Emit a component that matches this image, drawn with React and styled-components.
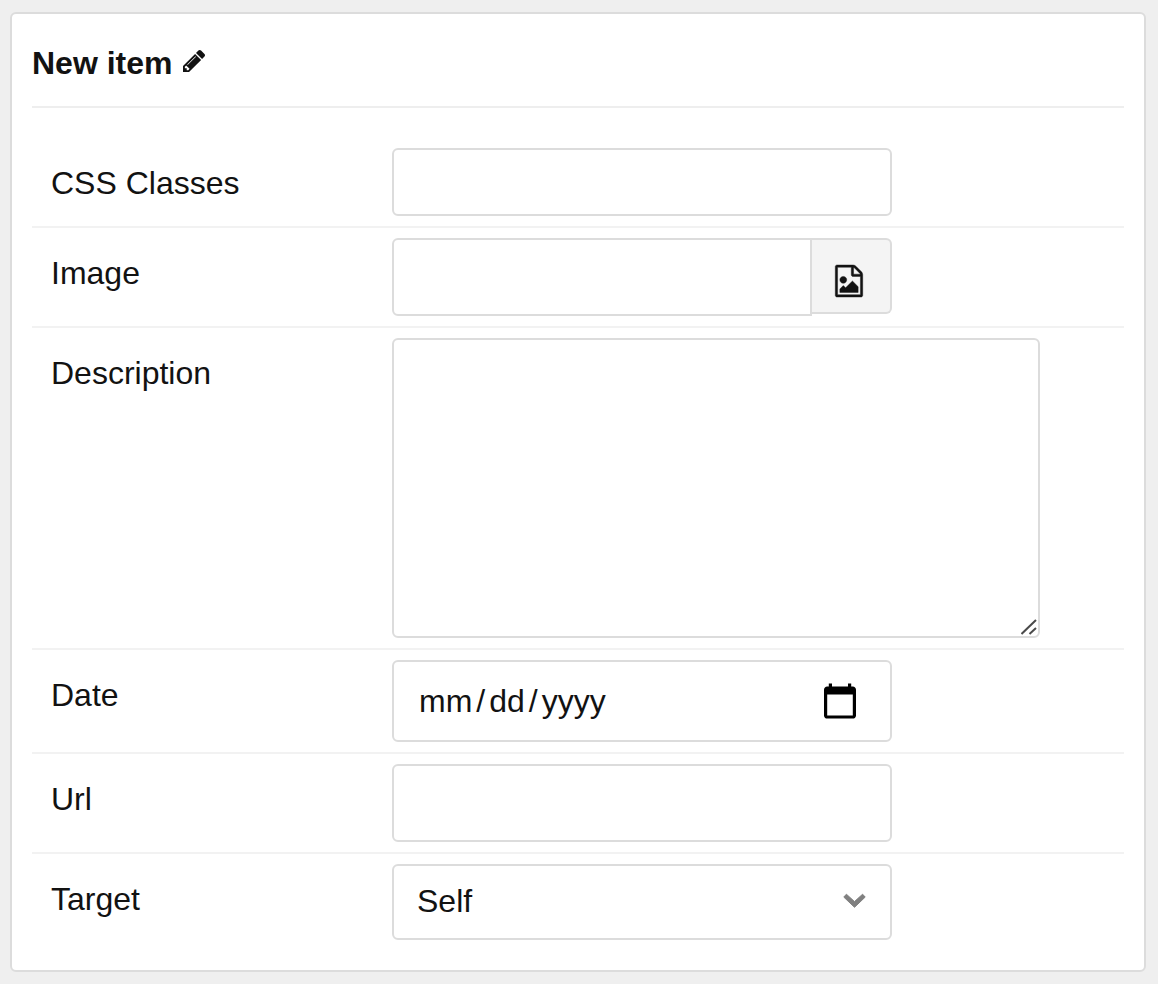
import React from "react";
import styled, { createGlobalStyle, css } from "styled-components";

const GlobalStyle = createGlobalStyle`
  *, *::before, *::after { box-sizing: border-box; }
  body {
    margin: 0;
    background: #efefef;
    color: #121212;
    font-family: "Helvetica Neue", "Liberation Sans", Arial, sans-serif;
    font-size: 32px;
    line-height: 40px;
  }
`;

const Page = styled.main`
  padding: 12px 12px 12px 10px;
`;

const Card = styled.section`
  padding: 20px;
  background: #fff;
  border: 2px solid #dcdcdc;
  border-radius: 6px;
`;

const Header = styled.header`
  display: flex;
  align-items: center;
  gap: 11px;
  padding-bottom: 14px;
  border-bottom: 2px solid #eee;
`;

const Title = styled.h1`
  margin: 0;
  font-size: 32px;
  font-weight: 600;
  line-height: 58px;
`;

const IconButton = styled.button`
  display: flex;
  padding: 0 0 4px;
  border: 0;
  background: none;
  color: inherit;
  cursor: pointer;
`;

const Form = styled.form`
  padding-top: 30px;
`;

const Row = styled.div`
  display: grid;
  grid-template-columns: 341px minmax(0, 1fr);
  align-items: start;
  padding: 10px 0 10px 19px;
  border-bottom: 2px solid #f2f2f2;

  &:last-child { border-bottom: 0; }
`;

const Label = styled.label`
  padding-top: 15px;
`;

const Field = styled.div`
  position: relative;
  display: flex;
  align-items: flex-start;
  width: 100%;
  max-width: ${(p) => (p.$wide ? 648 : 500)}px;
`;

const control = css`
  display: block;
  flex: 1;
  min-width: 0;
  margin: 0;
  border: 2px solid #dcdcdc;
  border-radius: 6px;
  background: #fff;
  color: inherit;
  font: inherit;
`;

const TextInput = styled.input`
  ${control}
  height: ${(p) => p.$height}px;
  padding: 0 24px;
  ${(p) => p.$joined && css`border-radius: 6px 0 0 6px;`}
`;

const DateInput = styled(TextInput)`
  &::-webkit-datetime-edit-text {
    padding: 0 3px;
  }

  &::-webkit-calendar-picker-indicator {
    width: 36px;
    height: 36px;
    opacity: 0;
  }
`;

const TextArea = styled.textarea`
  ${control}
  height: 300px;
  padding: 12px 24px;
  resize: vertical;

  &::-webkit-resizer { display: none; }
`;

const Select = styled.select`
  ${control}
  height: 76px;
  padding: 0 60px 2px 23px;
  appearance: none;
`;

const PickButton = styled.button`
  display: flex;
  align-items: center;
  justify-content: center;
  width: 80px;
  height: 76px;
  padding: 10px 4px 0 0;
  border: 2px solid #dcdcdc;
  border-left: 0;
  border-radius: 0 6px 6px 0;
  background: #f4f4f4;
  color: inherit;
  cursor: pointer;
`;

const Overlay = styled.svg`
  position: absolute;
  right: ${(p) => p.$right}px;
  bottom: ${(p) => p.$bottom}px;
  pointer-events: none;
`;

const PencilIcon = () => (
  <svg width="22" height="22" viewBox="0 149 1515 1515" fill="currentColor" aria-hidden="true">
    <path d="M363 1536l91-91-235-235-91 91v107h128v128h107zm523-928q0-22-22-22-10 0-17 7l-542 542q-7 7-7 17 0 22 22 22 10 0 17-7l542-542q7-7 7-17zm-54-192l416 416-832 832h-416v-416zm683 96q0 53-37 90l-166 166-416-416 166-165q36-38 90-38 53 0 91 38l235 234q37 39 37 91z" />
  </svg>
);

const FileImageIcon = () => (
  <svg width="32" height="32" viewBox="0 0 1792 1792" fill="currentColor" stroke="currentColor" strokeWidth="24" overflow="visible" aria-hidden="true">
    <path d="M1596 380q28 28 48 76t20 88v1152q0 40-28 68t-68 28h-1344q-40 0-68-28t-28-68v-1600q0-40 28-68t68-28h896q40 0 88 20t76 48zm-444-244v376h376q-10-29-22-41l-313-313q-12-12-41-22zm384 1528v-1024h-416q-40 0-68-28t-28-68v-416h-768v1536h1280zm-128-448v320h-1024v-192l192-192 128 128 384-384zm-832-192q-80 0-136-56t-56-136 56-136 136-56 136 56 56 136-56 136-136 56z" />
  </svg>
);

const CalendarIcon = () => (
  <Overlay $right={36} $bottom={23} width="32" height="36" viewBox="2 1 20 22" fill="#000" aria-hidden="true">
    <path d="M20 3h-1V1h-2v2H7V1H5v2H4c-1.1 0-2 .9-2 2v16c0 1.1.9 2 2 2h16c1.1 0 2-.9 2-2V5c0-1.1-.9-2-2-2zm0 18H4V8h16v13z" />
  </Overlay>
);

const ChevronIcon = () => (
  <Overlay $right={25} $bottom={31} width="24" height="16" viewBox="0 0 24 16" fill="#808080" stroke="#808080" strokeLinejoin="round" aria-hidden="true">
    <path d="M.8 4.1 3.4 1.2 11.5 8.6 19.6 1.2 22.2 4.1 11.5 14.3Z" />
  </Overlay>
);

const ResizeGrip = () => (
  <Overlay $right={3} $bottom={3} width="16" height="16" viewBox="0 0 16 16" fill="none" stroke="#4a4a4a" strokeWidth="2" aria-hidden="true">
    <path d="M.5 15 15 1M8.5 15 15 9" />
  </Overlay>
);

export default function App() {
  return (
    <>
      <GlobalStyle />
      <Page>
        <Card>
          <Header>
            <Title>New item</Title>
            <IconButton type="button" aria-label="Edit title"><PencilIcon /></IconButton>
          </Header>
          <Form>
            <Row>
              <Label htmlFor="css-classes">CSS Classes</Label>
              <Field><TextInput id="css-classes" type="text" $height={68} /></Field>
            </Row>
            <Row>
              <Label htmlFor="image">Image</Label>
              <Field>
                <TextInput id="image" type="text" $height={78} $joined />
                <PickButton type="button" aria-label="Choose image"><FileImageIcon /></PickButton>
              </Field>
            </Row>
            <Row>
              <Label htmlFor="description">Description</Label>
              <Field $wide>
                <TextArea id="description" />
                <ResizeGrip />
              </Field>
            </Row>
            <Row>
              <Label htmlFor="date">Date</Label>
              <Field>
                <DateInput id="date" type="date" $height={82} />
                <CalendarIcon />
              </Field>
            </Row>
            <Row>
              <Label htmlFor="url">Url</Label>
              <Field><TextInput id="url" type="url" $height={78} /></Field>
            </Row>
            <Row>
              <Label htmlFor="target">Target</Label>
              <Field>
                <Select id="target" defaultValue="self">
                  <option value="self">Self</option>
                  <option value="blank">Blank</option>
                </Select>
                <ChevronIcon />
              </Field>
            </Row>
          </Form>
        </Card>
      </Page>
    </>
  );
}
